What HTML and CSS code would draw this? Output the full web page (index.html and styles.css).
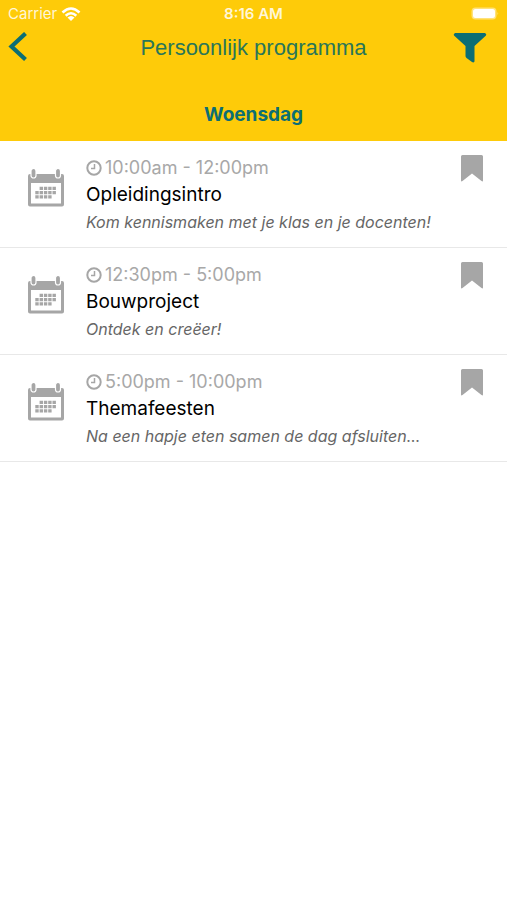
FILE: index.html
```html
<!DOCTYPE html>
<html lang="nl">
<head>
<meta charset="utf-8">
<meta name="viewport" content="width=device-width, initial-scale=1">
<title>Persoonlijk programma</title>
<link rel="stylesheet" href="styles.css">
</head>
<body>
<svg class="defs" aria-hidden="true">
  <symbol id="calendar" viewBox="0 0 36 38">
    <path fill="#a6a6a6" fill-rule="evenodd" d="M2 5H34Q36 5 36 7V35.500Q36 37.500 34 37.500H2Q0 37.500 0 35.500V7Q0 5 2 5ZM3 14V34.500H33V14Z"/>
    <g fill="#a6a6a6" stroke="#fff" stroke-width="1.200"><rect x="3" y="-.5" width="5" height="9.500" rx="2.500"/><rect x="27.500" y="-.5" width="5" height="9.500" rx="2.500"/></g>
    <g fill="none" stroke="#a6a6a6" stroke-width="3.300" stroke-dasharray="3.400 .9"><path d="M11.600 19.300H28"/><path d="M7.300 23.600H28"/><path d="M7.300 27.900H23.700"/></g>
  </symbol>
  <symbol id="clock" viewBox="0 0 16 16">
    <g fill="none" stroke="#a6a6a6"><circle cx="8" cy="8" r="6.700" stroke-width="2"/><path d="M8.500 4V8.500H5" stroke-width="1.500"/></g>
  </symbol>
  <symbol id="bookmark" viewBox="0 0 22 27">
    <path fill="#a6a6a6" d="M1.500 0H20.500Q22 0 22 1.500V25.500Q22 27 20.500 26L11 18.500 1.500 26Q0 27 0 25.500V1.500Q0 0 1.500 0Z"/>
  </symbol>
</svg>
<header class="header">
  <div class="status">
    <div class="carrier">Carrier
      <svg width="20" height="15" viewBox="0 0 20 15" fill="none" stroke="#fff" stroke-width="2.600"><path d="M1.500 5.500Q10-2.500 18.500 5.500M4.700 8.700Q10 3.800 15.300 8.700"/><path fill="#fff" stroke="none" d="M6.500 10.500Q10 7.500 13.500 10.500L10 14Z"/></svg>
    </div>
    <div class="time">8:16 AM</div>
    <div class="battery"><svg width="28" height="14" viewBox="0 0 28 14"><rect x=".5" y=".5" width="25" height="12" rx="4" fill="#ffe27a"/><rect x="2" y="2" width="22" height="9" rx="2.500" fill="#fff"/><path d="M26.500 5Q28 6.500 26.500 8Z" fill="#ffe58a"/></svg></div>
  </div>
  <div class="nav">
    <button class="icon-button" aria-label="Terug"><svg width="20" height="32" viewBox="0 0 20 32"><path d="M17.500 1.500L3.500 14.500 17.500 27.500" fill="none" stroke="#0c6e74" stroke-width="4.200"/></svg></button>
    <h1 class="title">Persoonlijk programma</h1>
    <button class="icon-button filter" aria-label="Filter"><svg width="34" height="30" viewBox="0 0 34 30"><path fill="#0c6e74" d="M2 0H32Q34 1 33 2.500L21.500 13V28.500Q20.500 30 19 29L13.500 25Q12.500 24 12.500 23V13L1 2.500Q0 1 2 0Z"/></svg></button>
  </div>
  <h2 class="day">Woensdag</h2>
</header>
<main>
  <ul class="list">
    <li class="item">
      <svg class="calendar"><use href="#calendar"/></svg>
      <div class="details">
        <div class="hours"><svg class="clock"><use href="#clock"/></svg>10:00am - 12:00pm</div>
        <h3 class="name">Opleidingsintro</h3>
        <p class="note">Kom kennismaken met je klas en je docenten!</p>
      </div>
      <button class="icon-button mark" aria-label="Bewaar Opleidingsintro"><svg class="bookmark"><use href="#bookmark"/></svg></button>
    </li>
    <li class="item">
      <svg class="calendar"><use href="#calendar"/></svg>
      <div class="details">
        <div class="hours"><svg class="clock"><use href="#clock"/></svg>12:30pm - 5:00pm</div>
        <h3 class="name">Bouwproject</h3>
        <p class="note">Ontdek en creëer!</p>
      </div>
      <button class="icon-button mark" aria-label="Bewaar Bouwproject"><svg class="bookmark"><use href="#bookmark"/></svg></button>
    </li>
    <li class="item">
      <svg class="calendar"><use href="#calendar"/></svg>
      <div class="details">
        <div class="hours"><svg class="clock"><use href="#clock"/></svg>5:00pm - 10:00pm</div>
        <h3 class="name">Themafeesten</h3>
        <p class="note">Na een hapje eten samen de dag afsluiten...</p>
      </div>
      <button class="icon-button mark" aria-label="Bewaar Themafeesten"><svg class="bookmark"><use href="#bookmark"/></svg></button>
    </li>
  </ul>
</main>
</body>
</html>
```
FILE: styles.css
```css
* { box-sizing: border-box; }
body { margin: 0; background: #fff; font-family: Inter, "Liberation Sans", sans-serif; }
h1, h2, h3, p, ul { margin: 0; padding: 0; }
svg { display: block; flex: none; }
.defs { display: none; }
.header { background: #fecb09; color: #0c6e74; padding-bottom: 14px; }
.status {
  display: grid;
  grid-template-columns: 1fr auto 1fr;
  align-items: start;
  height: 28px;
  padding: 0 8px;
  color: #fff6d8;
  font-size: 15px;
  line-height: 28px;
}
.carrier { display: flex; align-items: center; gap: 4px; height: 28px; }
.time { font-weight: 600; }
.battery { justify-self: end; padding-top: 7px; }
.nav {
  display: grid;
  grid-template-columns: 1fr auto 1fr;
  align-items: center;
  height: 40px;
  padding: 0 8px;
}
.icon-button { display: block; padding: 0; border: 0; background: none; justify-self: start; }
.filter { justify-self: end; margin-right: 12px; }
.title { font: 400 22px/40px "Liberation Sans", sans-serif; color: #2a7658; }
.day { margin-top: 35px; font-size: 19px; line-height: 24px; font-weight: 700; text-align: center; }
.list { list-style: none; }
.item {
  display: flex;
  align-items: flex-start;
  padding: 14px 24px 12px 28px;
  border-bottom: 1px solid #e8e8e8;
}
.calendar { width: 36px; height: 38px; margin-top: 14px; }
.details { flex: 1; min-width: 0; margin-left: 22px; }
.hours { display: flex; align-items: center; gap: 3px; font-size: 18px; line-height: 26px; color: #a8a8a8; }
.clock { width: 16px; height: 16px; }
.name { font-size: 19px; line-height: 28px; font-weight: 400; color: #000; }
.note { font-size: 16px; line-height: 26px; font-style: italic; color: #666; }
.bookmark { width: 22px; height: 27px; }
```
